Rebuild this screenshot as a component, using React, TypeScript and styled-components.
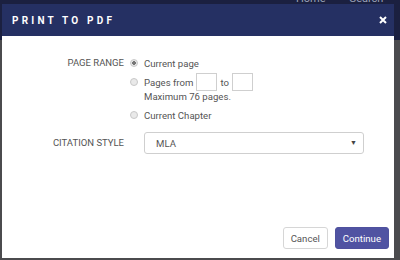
import React from 'react';
import styled, { createGlobalStyle } from 'styled-components';

const GlobalStyle = createGlobalStyle`
  html, body {
    margin: 0;
    padding: 0;
    width: 400px;
    height: 260px;
    overflow: hidden;
    background: #4b4b4e;
    font-family: Roboto, "Liberation Sans", Arial, sans-serif;
  }
`;

const Page = styled.div`
  position: relative;
  width: 400px;
  height: 260px;
  background: #4b4b4e;
`;

const NavBar = styled.div`
  height: 40px;
  background: #1b2040;
  display: flex;
  padding-left: 296px;
  gap: 24px;
  overflow: hidden;
`;

const NavLink = styled.span`
  color: #9aa0b8;
  font-size: 11px;
  line-height: 11px;
  margin-top: -7px;
  white-space: nowrap;
`;

const Modal = styled.div`
  position: absolute;
  left: 2px;
  top: 4px;
  width: 392px;
  height: 254px;
  background: #ffffff;
  display: flex;
  flex-direction: column;
`;

const Header = styled.div`
  height: 32px;
  background: #253063;
  display: flex;
  align-items: center;
  justify-content: space-between;
  padding: 0 6px 0 10px;
`;

const Title = styled.h1`
  margin: 0;
  color: #ffffff;
  font-size: 10px;
  font-weight: 700;
  letter-spacing: 3.2px;
`;

const Close = styled.button`
  border: none;
  background: none;
  padding: 0;
  width: 10px;
  height: 10px;
  display: flex;
  align-items: center;
  justify-content: center;
  cursor: pointer;
`;

const Body = styled.div`
  flex: 1;
  padding-top: 20px;
  display: flex;
  flex-direction: column;
`;

const FieldRow = styled.div<{ $gap?: number }>`
  display: grid;
  grid-template-columns: 122px 1fr;
  column-gap: 6px;
  margin-top: ${p => p.$gap ?? 0}px;
`;

const Label = styled.div<{ $h: number }>`
  text-align: right;
  font-size: 9.5px;
  color: #555555;
  height: ${p => p.$h}px;
  line-height: ${p => p.$h}px;
`;

const Options = styled.div`
  display: flex;
  flex-direction: column;
`;

const Option = styled.label<{ $h: number; $top?: number }>`
  display: flex;
  align-items: center;
  height: ${p => p.$h}px;
  margin-top: ${p => p.$top ?? 0}px;
  font-size: 9.6px;
  color: #555555;
`;

const Radio = styled.span<{ $checked?: boolean }>`
  width: 8px;
  height: 8px;
  margin-right: 6px;
  box-sizing: border-box;
  border-radius: 50%;
  border: 1px solid #c8c8c8;
  background: ${p => (p.$checked ? 'radial-gradient(circle, #777 0 1.6px, #e6e6e6 2px)' : '#e9e9e9')};
`;

const Hint = styled.div`
  padding-left: 14px;
  font-size: 9.6px;
  color: #555555;
  height: 14px;
  line-height: 12px;
`;

const NumBox = styled.input`
  width: 21px;
  height: 18px;
  box-sizing: border-box;
  border: 1px solid #cfcfcf;
  margin: 0 3px;
  padding: 0;
`;

const Select = styled.div`
  margin-left: 14px;
  width: 220px;
  height: 22px;
  box-sizing: border-box;
  border: 1px solid #cfcfcf;
  border-radius: 3px;
  display: flex;
  align-items: center;
  justify-content: space-between;
  padding: 0 6px 0 11px;
  font-size: 9.6px;
  color: #555555;
`;

const Caret = styled.span`
  font-size: 7px;
  color: #444;
`;

const Spacer = styled.div`
  flex: 1;
`;

const Footer = styled.div`
  display: flex;
  justify-content: flex-end;
  gap: 7px;
  padding: 0 5px 9px 0;
`;

const Button = styled.button<{ $primary?: boolean }>`
  height: 22px;
  box-sizing: border-box;
  border-radius: 3px;
  font-family: inherit;
  font-size: 9.6px;
  padding: 0 ${p => (p.$primary ? 7 : 7)}px;
  border: 1px solid ${p => (p.$primary ? '#4f519e' : '#d6d6d6')};
  background: ${p => (p.$primary ? '#5053a2' : '#ffffff')};
  color: ${p => (p.$primary ? '#ffffff' : '#555555')};
  cursor: pointer;
`;

export default function App() {
  return (
    <Page>
      <GlobalStyle />
      <NavBar>
        <NavLink>Home</NavLink>
        <NavLink>Search</NavLink>
        <NavLink>L</NavLink>
      </NavBar>
      <Modal>
        <Header>
          <Title>PRINT TO PDF</Title>
          <Close aria-label="Close">
            <svg width="8" height="8" viewBox="0 0 8 8">
              <path d="M1 1L7 7M7 1L1 7" stroke="#fff" strokeWidth="2" />
            </svg>
          </Close>
        </Header>
        <Body>
          <FieldRow>
            <Label $h={14}>PAGE RANGE</Label>
            <Options>
              <Option $h={14}>
                <Radio $checked />
                Current page
              </Option>
              <Option $h={18} $top={3}>
                <Radio />
                Pages from
                <NumBox />
                to
                <NumBox />
              </Option>
              <Hint>Maximum 76 pages.</Hint>
              <Option $h={14} $top={3}>
                <Radio />
                Current Chapter
              </Option>
            </Options>
          </FieldRow>
          <FieldRow $gap={10}>
            <Label $h={22}>CITATION STYLE</Label>
            <Select>
              MLA
              <Caret>▼</Caret>
            </Select>
          </FieldRow>
          <Spacer />
          <Footer>
            <Button>Cancel</Button>
            <Button $primary>Continue</Button>
          </Footer>
        </Body>
      </Modal>
    </Page>
  );
}
